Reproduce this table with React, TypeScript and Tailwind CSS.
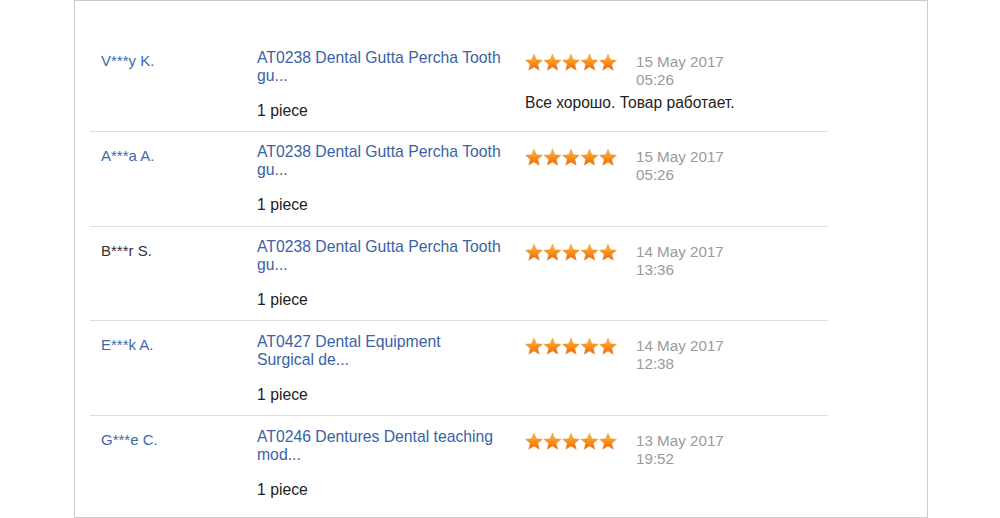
import React from "react";

type Row = {
  name: string;
  link: boolean;
  product1: string;
  product2: string;
  date: string;
  time: string;
  comment?: string;
};

const rows: Row[] = [
  { name: "V***y K.", link: true, product1: "AT0238 Dental Gutta Percha Tooth", product2: "gu...", date: "15 May 2017", time: "05:26", comment: "Все хорошо. Товар работает." },
  { name: "A***a A.", link: true, product1: "AT0238 Dental Gutta Percha Tooth", product2: "gu...", date: "15 May 2017", time: "05:26" },
  { name: "B***r S.", link: false, product1: "AT0238 Dental Gutta Percha Tooth", product2: "gu...", date: "14 May 2017", time: "13:36" },
  { name: "E***k A.", link: true, product1: "AT0427 Dental Equipment", product2: "Surgical de...", date: "14 May 2017", time: "12:38" },
  { name: "G***e C.", link: true, product1: "AT0246 Dentures Dental teaching", product2: "mod...", date: "13 May 2017", time: "19:52" },
];

const STAR = "M9 0 L11.35 5.76 L17.56 6.22 L12.8 10.24 L14.29 16.28 L9 13 L3.71 16.28 L5.2 10.24 L0.44 6.22 L6.65 5.76 Z";

function Stars() {
  return (
    <svg width="92" height="17" viewBox="0 0 92 17" className="block">
      <defs>
        <linearGradient id="sg" x1="0" y1="0" x2="0" y2="1">
          <stop offset="0" stopColor="#fcc23a" />
          <stop offset="0.5" stopColor="#f7921c" />
          <stop offset="1" stopColor="#ec6512" />
        </linearGradient>
      </defs>
      {[0, 1, 2, 3, 4].map((i) => (
        <path key={i} d={STAR} transform={`translate(${i * 18.5} 0)`} fill="url(#sg)" stroke="#e8862a" strokeWidth="0.4" />
      ))}
    </svg>
  );
}

export default function App() {
  return (
    <div className="w-[1000px] h-[518px] bg-white overflow-hidden" style={{ fontFamily: '"Liberation Sans", Arial, sans-serif' }}>
      <div className="ml-[74px] w-[854px] h-[518px] border border-[#cbcbcb] pt-[36.3px] pl-[15px] box-border overflow-hidden">
        <div className="w-[738px]">
          {rows.map((r, i) => (
            <div
              key={i}
              className={`flex h-[94.7px] box-border pl-[11px] ${i < rows.length - 1 ? "border-b border-[#dedede]" : ""}`}
            >
              <div className={`w-[156px] shrink-0 pt-[15px] text-[15px] leading-[18px] ${r.link ? "text-[#3f68ab]" : "text-[#333333]"}`}>
                {r.name}
              </div>
              <div className="w-[268px] shrink-0 pt-[11.5px]">
                <div className="text-[15.75px] leading-[18px] text-[#3a62a6]">
                  <div className="whitespace-nowrap">{r.product1}</div>
                  <div className="whitespace-nowrap">{r.product2}</div>
                </div>
                <div className="mt-[17px] text-[15.75px] leading-[18px] text-[#222222]">1 piece</div>
              </div>
              <div className="flex-1 pt-[16px]">
                <div className="flex">
                  <div className="w-[111px] shrink-0 pt-[1px]">
                    <Stars />
                  </div>
                  <div className="text-[15.2px] leading-[18px] text-[#9a9a9a]">
                    <div>{r.date}</div>
                    <div>{r.time}</div>
                  </div>
                </div>
                {r.comment && (
                  <div className="mt-[5px] text-[15.6px] leading-[18px] text-[#222222]">{r.comment}</div>
                )}
              </div>
            </div>
          ))}
        </div>
      </div>
    </div>
  );
}
